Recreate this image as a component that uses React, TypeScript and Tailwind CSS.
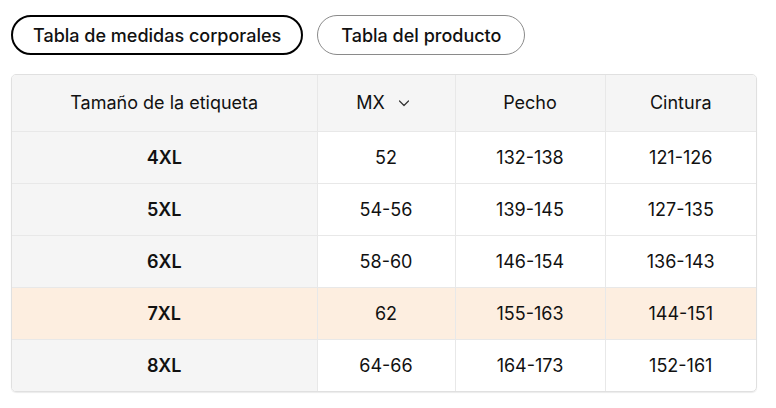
import React from 'react';

const rows = [
  { size: '4XL', mx: '52', pecho: '132-138', cintura: '121-126' },
  { size: '5XL', mx: '54-56', pecho: '139-145', cintura: '127-135' },
  { size: '6XL', mx: '58-60', pecho: '146-154', cintura: '136-143' },
  { size: '7XL', mx: '62', pecho: '155-163', cintura: '144-151', active: true },
  { size: '8XL', mx: '64-66', pecho: '164-173', cintura: '152-161' },
];

const App: React.FC = () => {
  return (
    <div className="w-[776px] h-[408px] bg-white px-[11px] pt-[15px] font-['Inter',sans-serif] text-[#111] text-[18px]">
      {/* Tabs */}
      <div className="flex gap-[14px]">
        <button className="h-[40px] px-[20px] rounded-full border-2 border-black font-medium">
          Tabla de medidas corporales
        </button>
        <button className="h-[40px] px-[23px] rounded-full border border-[#8a8a8a] font-medium">
          Tabla del producto
        </button>
      </div>

      {/* Size table */}
      <div className="mt-[19px] w-[746px] rounded-[5px] border border-[#e0e0e0] overflow-hidden shadow-[0_1px_1px_rgba(0,0,0,0.08)]">
        <table className="w-full border-collapse table-fixed">
          <colgroup>
            <col className="w-[305px]" />
            <col className="w-[138px]" />
            <col className="w-[150px]" />
            <col />
          </colgroup>
          <thead>
            <tr className="h-[56px] bg-[#f5f5f5]">
              <th className="font-normal">Tamaño de la etiqueta</th>
              <th className="font-normal border-l border-[#e8e8e8]">
                <span className="inline-flex items-center gap-[12px] pr-[5px]">
                  MX
                  <svg width="14" height="14" viewBox="0 0 14 14" fill="none" stroke="#333" strokeWidth="1.2">
                    <path d="M2.5 5 7 9.5 11.5 5" strokeLinecap="round" strokeLinejoin="round" />
                  </svg>
                </span>
              </th>
              <th className="font-normal border-l border-[#e8e8e8]">Pecho</th>
              <th className="font-normal border-l border-[#e8e8e8]">Cintura</th>
            </tr>
          </thead>
          <tbody>
            {rows.map((r) => (
              <tr
                key={r.size}
                className={`h-[52px] border-t border-[#e8e8e8] text-center ${r.active ? 'bg-[#fdeee0]' : ''}`}
              >
                <td className={`font-semibold ${r.active ? '' : 'bg-[#f5f5f5]'}`}>{r.size}</td>
                <td className="border-l border-[#e8e8e8]">{r.mx}</td>
                <td className="border-l border-[#e8e8e8]">{r.pecho}</td>
                <td className="border-l border-[#e8e8e8]">{r.cintura}</td>
              </tr>
            ))}
          </tbody>
        </table>
      </div>
    </div>
  );
};

export default App;
